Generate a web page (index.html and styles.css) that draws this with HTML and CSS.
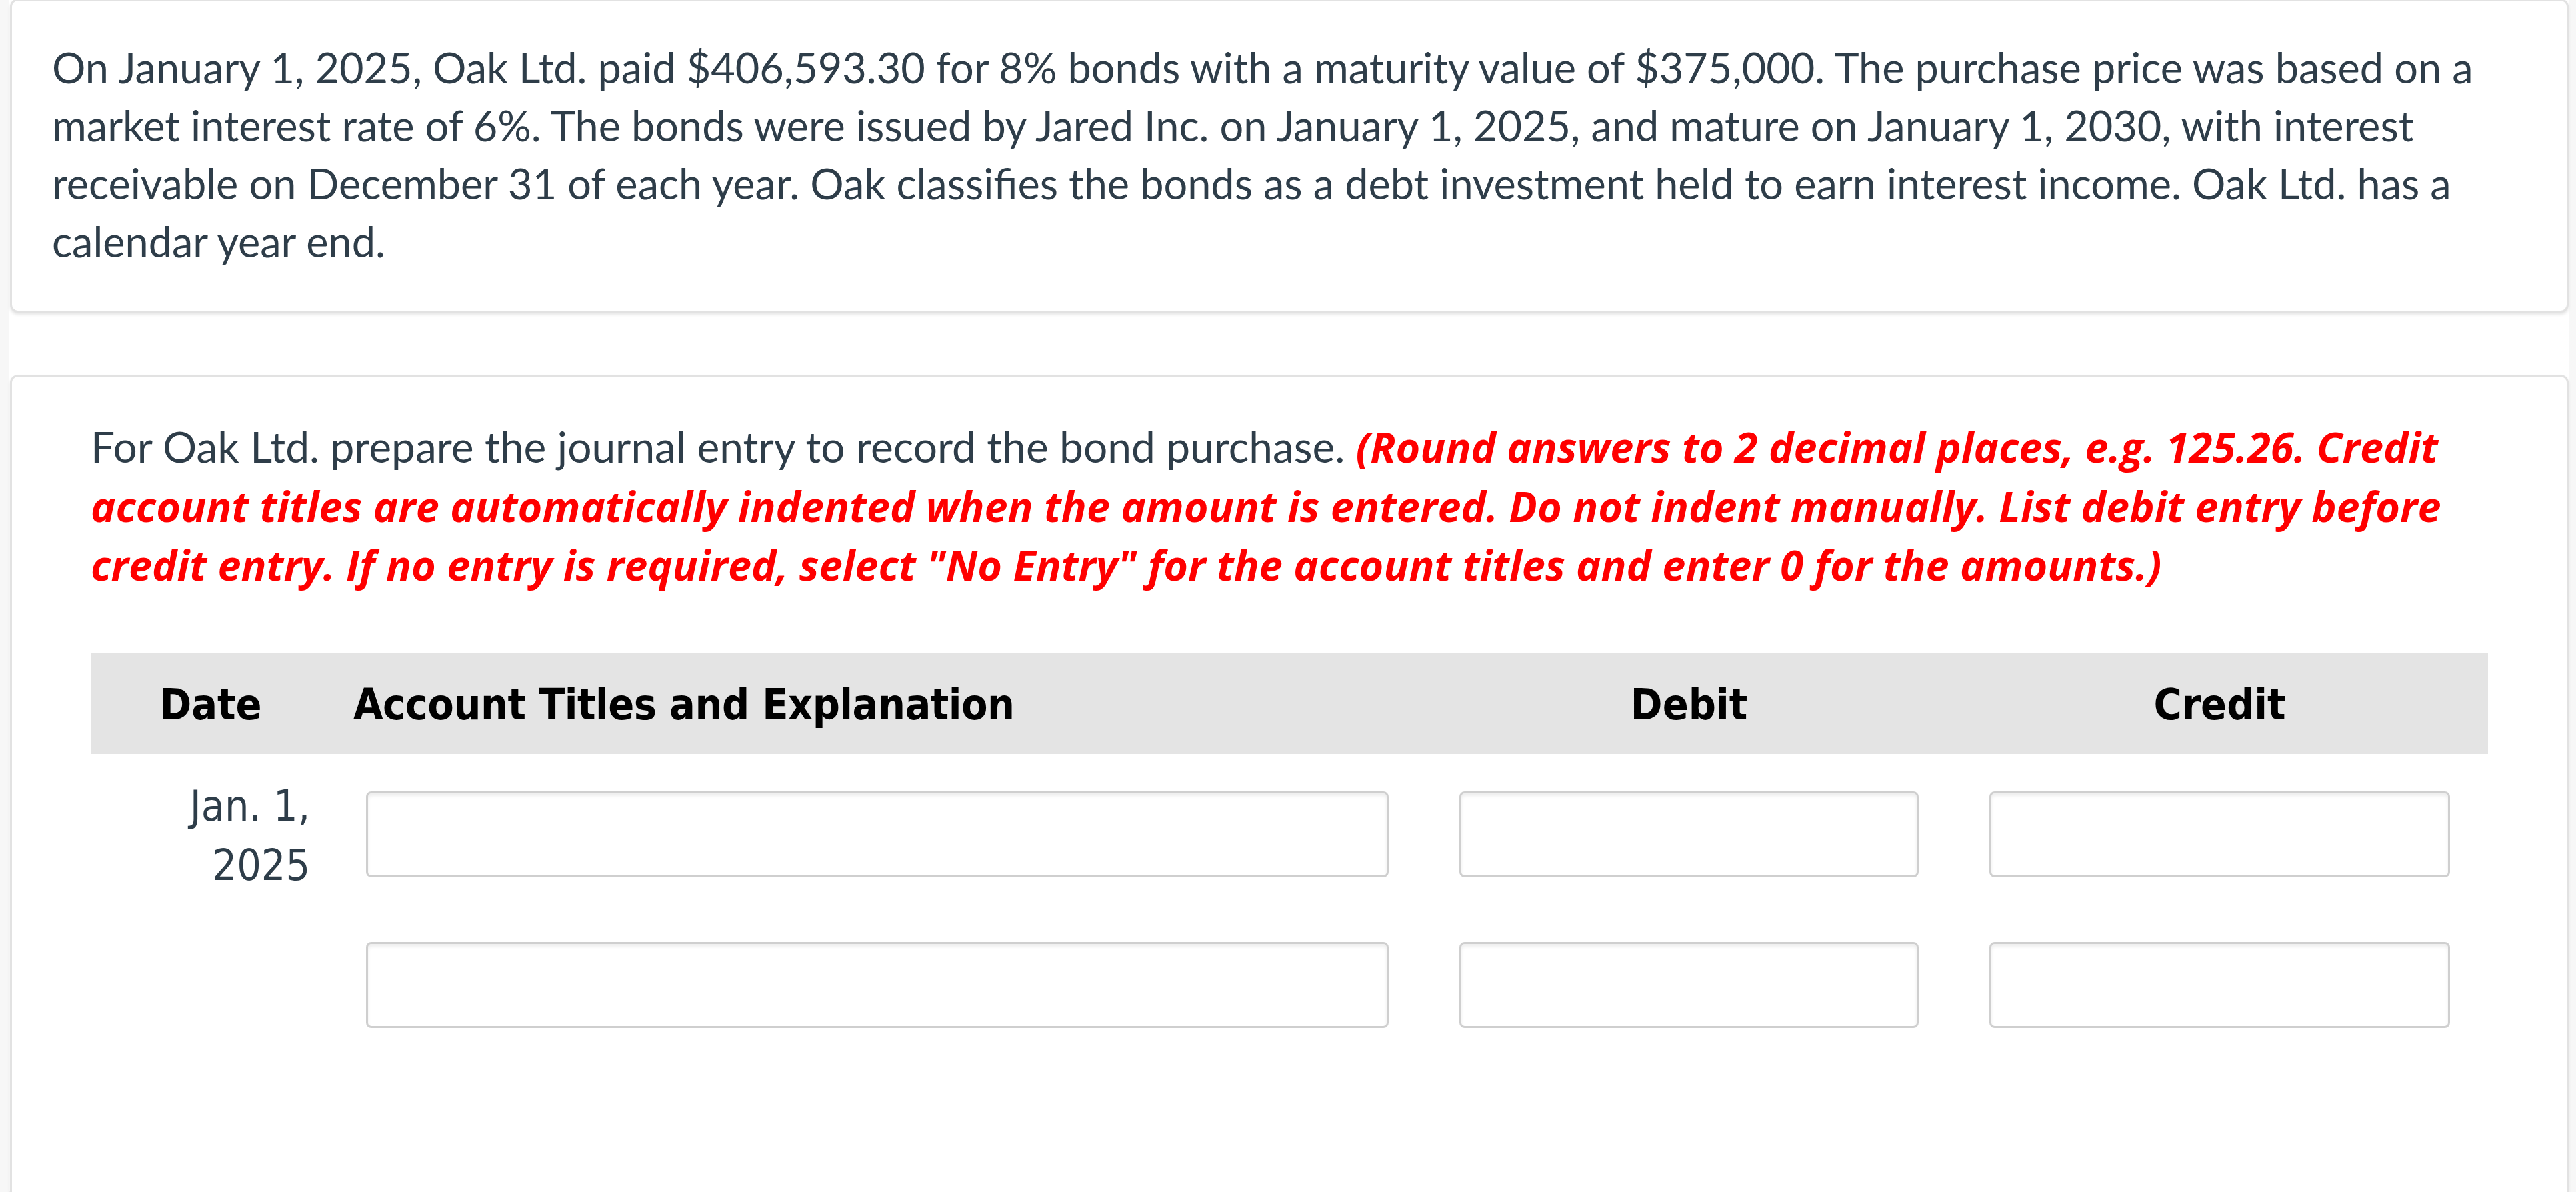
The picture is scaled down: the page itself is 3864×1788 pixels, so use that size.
FILE: index.html
```html
<!DOCTYPE html>
<html lang="en">
<head>
<meta charset="utf-8">
<title>Bond purchase journal entry</title>
<link rel="stylesheet" href="styles.css">
</head>
<body>
<div class="page">
  <section class="card intro">
    <p class="lead">On January 1, 2025, Oak Ltd. paid $406,593.30 for 8% bonds with a maturity value of $375,000. The purchase price was based on a market interest rate of 6%. The bonds were issued by Jared Inc. on January 1, 2025, and mature on January 1, 2030, with interest receivable on December 31 of each year. Oak classifies the bonds as a debt investment held to earn interest income. Oak Ltd. has a calendar year end.</p>
  </section>
  <section class="card question">
    <p class="lead">For Oak Ltd. prepare the journal entry to record the bond purchase. <em class="note">(Round answers to 2 decimal places, e.g. 125.26. Credit account titles are automatically indented when the amount is entered. Do not indent manually. List debit entry before credit entry. If no entry is required, select "No Entry" for the account titles and enter 0 for the amounts.)</em></p>
    <div class="journal">
      <div class="jrow head">
        <div class="c date">Date</div>
        <div class="c acct">Account Titles and Explanation</div>
        <div class="c amt">Debit</div>
        <div class="c amt">Credit</div>
      </div>
      <div class="jrow entry first">
        <div class="c date">Jan. 1,<br>2025</div>
        <div class="c acct"><input class="box" type="text" aria-label="Account title 1"></div>
        <div class="c amt"><input class="box" type="text" aria-label="Debit 1"></div>
        <div class="c amt"><input class="box" type="text" aria-label="Credit 1"></div>
      </div>
      <div class="jrow entry">
        <div class="c date"></div>
        <div class="c acct"><input class="box" type="text" aria-label="Account title 2"></div>
        <div class="c amt"><input class="box" type="text" aria-label="Debit 2"></div>
        <div class="c amt"><input class="box" type="text" aria-label="Credit 2"></div>
      </div>
    </div>
  </section>
</div>
</body>
</html>
```
FILE: styles.css
```css
html, body {
  margin: 0;
  padding: 0;
}
body {
  background: #f7f7f7;
  font-family: Lato, "Open Sans", sans-serif;
  color: #2e3d49;
  height: 1788px;
  overflow: hidden;
}
.page {
  margin: 0 10px 0 13px;
  padding: 0 1px 0 2px;
  background: #ffffff;
  height: 1788px;
}
.card {
  background: #ffffff;
  border: 3px solid #e2e2e2;
  border-radius: 12px;
  box-shadow: 0 3px 4px rgba(0, 0, 0, 0.10);
}
.intro {
  margin-top: -2px;
  padding: 56px 60px 61px 60px;
}
.intro .lead {
  font-size: 63px;
  line-height: 87px;
}
.question {
  margin-top: 93px;
  padding: 61px 118px 300px 118px;
}
.lead {
  margin: 0;
  font-size: 64px;
  line-height: 88.5px;
}
.note {
  color: #ff0000;
  font-family: "Open Sans", "Noto Sans", sans-serif;
  font-size: 63px;
  font-weight: 700;
  font-style: italic;
}
.journal {
  margin-top: 88px;
  font-family: "DejaVu Sans", Verdana, sans-serif;
  font-stretch: condensed;
}
.jrow {
  display: grid;
  grid-template-columns: 360px 1640px 795px 797px;
  align-items: start;
}
.head {
  background: #e4e4e4;
  color: #000000;
  font-weight: 700;
  font-size: 64px;
  line-height: 89px;
  padding: 33px 0 29px 0;
}
.head .date { text-align: center; }
.head .acct {
  padding-left: 34px;
  letter-spacing: -0.5px;
}
.head .amt { text-align: center; }
.entry {
  font-size: 64px;
  line-height: 89px;
  color: #2e3d49;
}
.entry.first { margin-top: 34px; }
.entry .date {
  text-align: right;
  padding-right: 31px;
  min-height: 178px;
}
.entry .c.acct, .entry .c.amt {
  padding: 22px 53px 0 53px;
}
.entry + .entry { margin-top: 48px; }
.box {
  display: block;
  box-sizing: border-box;
  width: 100%;
  height: 129px;
  margin: 0;
  border: 3px solid #cfcfcf;
  border-radius: 8px;
  background: #ffffff;
  box-shadow: inset 0 4px 5px rgba(0, 0, 0, 0.07);
  font-family: Lato, sans-serif;
  font-size: 56px;
  padding: 0 16px;
}
```
